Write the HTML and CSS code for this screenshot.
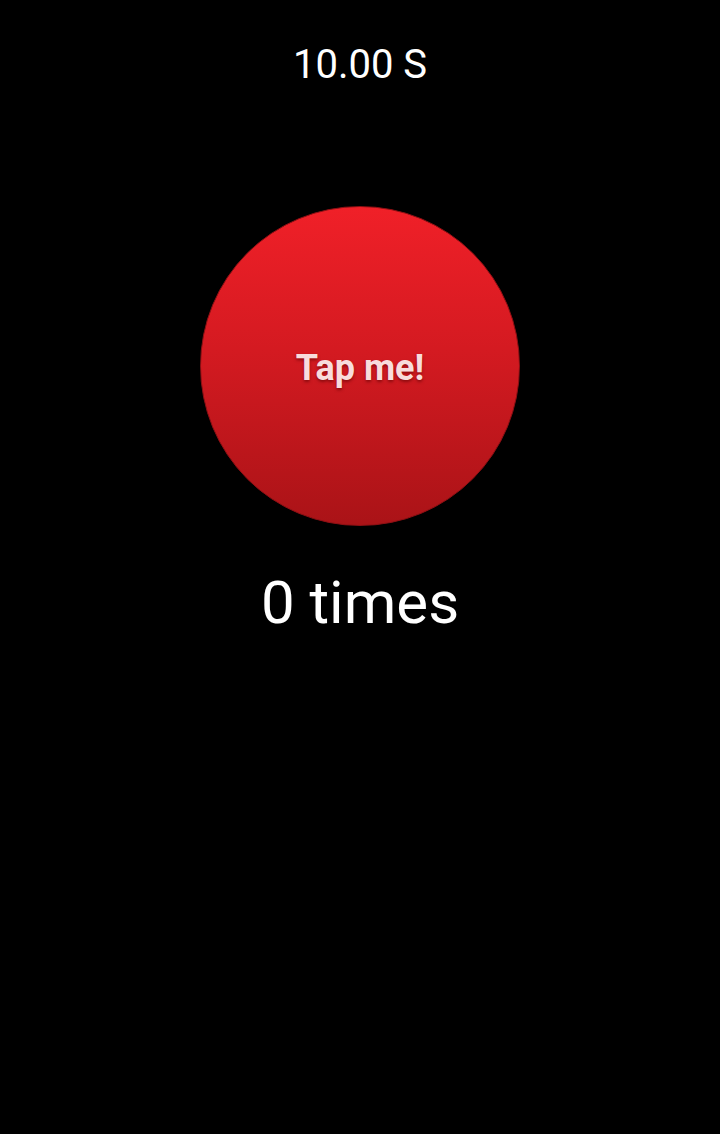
FILE: index.html
```html
<!DOCTYPE html>
<html>
<head>
<meta charset="utf-8">
<link rel="stylesheet" href="styles.css">
</head>
<body>
<main class="screen">
  <div class="timer">10.00 S</div>
  <button class="tap">Tap me!</button>
  <div class="count">0 times</div>
</main>
</body>
</html>
```
FILE: styles.css
```css
html, body {
  margin: 0;
  padding: 0;
  background: #000;
  height: 100%;
}
.screen {
  display: flex;
  flex-direction: column;
  align-items: center;
  padding-top: 45px;
  font-family: Roboto, "Liberation Sans", sans-serif;
  color: #fff;
}
.timer {
  font-size: 40px;
  line-height: 40px;
  height: 40px;
}
.tap {
  margin-top: 121px;
  width: 320px;
  height: 320px;
  border-radius: 50%;
  box-sizing: border-box;
  border: 1px solid #8e1014;
  background: linear-gradient(to bottom, #f02028 0%, #d41a21 45%, #aa1317 100%);
  display: flex;
  align-items: center;
  justify-content: center;
  padding: 3px 0 0 0;
  font-family: Roboto, "Liberation Sans", sans-serif;
  font-weight: 700;
  font-size: 36px;
  line-height: 36px;
  color: #f8dcdc;
  text-shadow: 0 2px 3px rgba(90, 0, 0, 0.55);
}
.count {
  margin-top: 47px;
  font-size: 60px;
  line-height: 60px;
}
```
